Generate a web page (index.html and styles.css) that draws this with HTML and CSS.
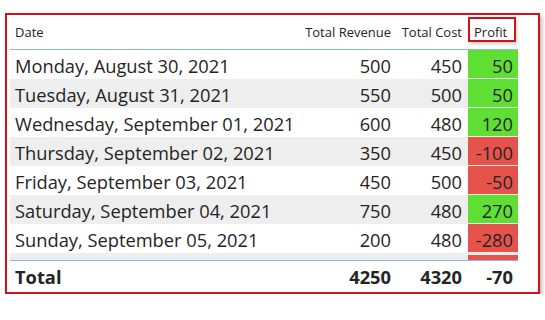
FILE: index.html
```html
<!DOCTYPE html>
<html>
<head>
<meta charset="utf-8">
<link rel="stylesheet" href="styles.css">
</head>
<body>
<div class="frame">
  <div class="grid head">
    <div class="cell left">Date</div>
    <div class="cell">Total Revenue</div>
    <div class="cell">Total Cost</div>
    <div class="cell profit-head"><span>Profit</span><div class="mark"></div></div>
  </div>
  <div class="body">
    <div class="grid row">
      <div class="cell left">Monday, August 30, 2021</div>
      <div class="cell">500</div><div class="cell">450</div><div class="cell pos">50</div>
    </div>
    <div class="grid row alt">
      <div class="cell left">Tuesday, August 31, 2021</div>
      <div class="cell">550</div><div class="cell">500</div><div class="cell pos">50</div>
    </div>
    <div class="grid row">
      <div class="cell left">Wednesday, September 01, 2021</div>
      <div class="cell">600</div><div class="cell">480</div><div class="cell pos">120</div>
    </div>
    <div class="grid row alt">
      <div class="cell left">Thursday, September 02, 2021</div>
      <div class="cell">350</div><div class="cell">450</div><div class="cell neg">-100</div>
    </div>
    <div class="grid row">
      <div class="cell left">Friday, September 03, 2021</div>
      <div class="cell">450</div><div class="cell">500</div><div class="cell neg">-50</div>
    </div>
    <div class="grid row alt">
      <div class="cell left">Saturday, September 04, 2021</div>
      <div class="cell">750</div><div class="cell">480</div><div class="cell pos">270</div>
    </div>
    <div class="grid row">
      <div class="cell left">Sunday, September 05, 2021</div>
      <div class="cell">200</div><div class="cell">480</div><div class="cell neg">-280</div>
    </div>
    <div class="grid row alt partial">
      <div class="cell left"></div>
      <div class="cell"></div><div class="cell"></div><div class="cell neg"></div>
    </div>
  </div>
  <div class="grid total">
    <div class="cell left">Total</div>
    <div class="cell">4250</div>
    <div class="cell">4320</div>
    <div class="cell">-70</div>
  </div>
</div>
</body>
</html>
```

FILE: styles.css
```css
html, body {
  margin: 0;
  padding: 0;
  background: #ffffff;
}
body {
  font-family: "Open Sans", "Noto Sans", sans-serif;
  color: #252423;
}
.frame {
  margin: 13px 0 0 5px;
  width: 528px;
  height: 277px;
  border: 2px solid #d0121b;
  box-shadow: 2px 3px 4px rgba(0, 0, 0, 0.28);
  padding: 0 0 0 3px;
  background: #fff;
}
.grid {
  display: grid;
  grid-template-columns: 286px 101px 71px 50px;
  width: 508px;
}
.cell {
  text-align: right;
  padding-right: 6px;
  white-space: nowrap;
}
.cell.left {
  text-align: left;
  padding-left: 5px;
  padding-right: 0;
}
.head {
  height: 34px;
  font-size: 13px;
  border-bottom: 1px solid #8ab8e6;
}
.head .cell {
  display: flex;
  align-items: center;
  justify-content: flex-end;
}
.head .cell.left {
  justify-content: flex-start;
}
.profit-head {
  position: relative;
  justify-content: flex-start !important;
  padding-left: 6px;
}
.mark {
  position: absolute;
  left: 0;
  top: 2px;
  width: 44px;
  height: 21px;
  border: 2px solid #d0121b;
  box-shadow: 1px 2px 3px rgba(0, 0, 0, 0.2);
}
.row {
  height: 29px;
  line-height: 29px;
  font-size: 18.3px;
}
.row .cell {
  padding-top: 1px;
  height: 28px;
}
.row.alt {
  background: #eeeeee;
}
.pos, .neg {
  border-bottom: 2px solid #e6ecee;
  height: 27px !important;
}
.pos {
  background: #5fdf34;
  padding-right: 5px !important;
}
.neg {
  background: #e5534b;
  padding-right: 5px !important;
}
.row.partial {
  height: 7px;
}
.row.partial .cell {
  height: 7px !important;
  padding-top: 0;
  border: 0;
}
.row.partial .neg {
  height: 5px !important;
  margin-top: 2px;
}
.total {
  border-top: 1px solid #8ab8e6;
  height: 31px;
  line-height: 31px;
  font-size: 18.3px;
  font-weight: 700;
}
.total .cell:last-child {
  padding-right: 5px;
}
```
